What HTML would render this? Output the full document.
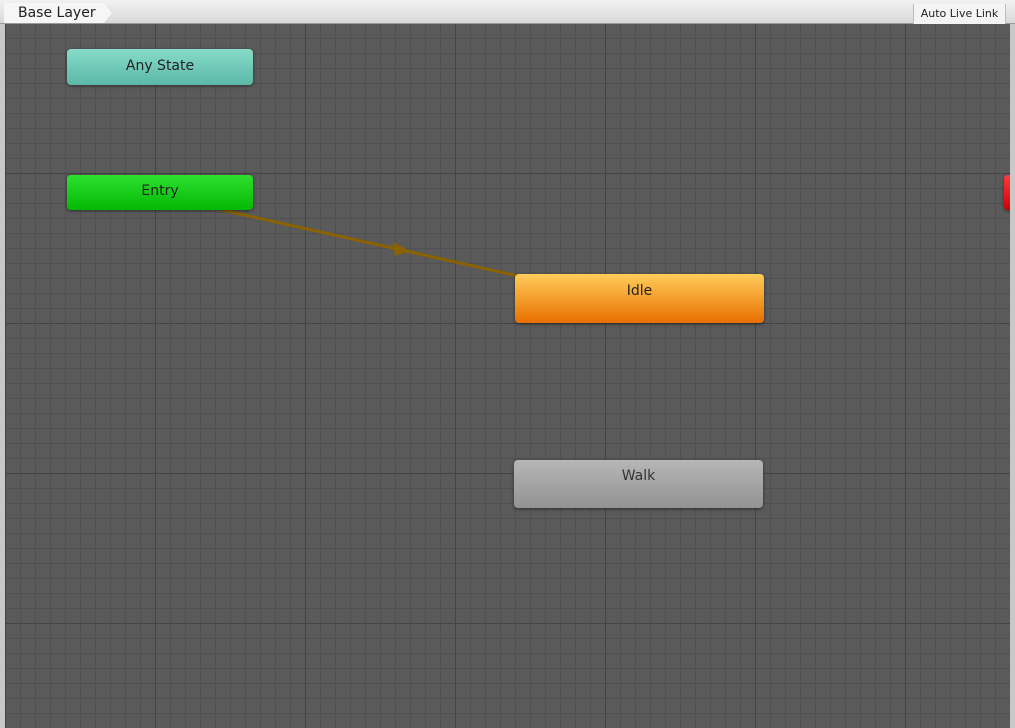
<!DOCTYPE html>
<html><head><style>
body{margin:0;width:1015px;height:728px;overflow:hidden;background:#c8c8c8;font-family:"DejaVu Sans","Liberation Sans",sans-serif;position:relative}
#top{position:absolute;left:0;top:0;width:1015px;height:24px;background:linear-gradient(#f2f2f2,#d8d8d8);border-bottom:1px solid #9a9a9a;box-sizing:border-box}
#tab{position:absolute;left:4px;top:3px;width:100px;height:20px;background:#f6f6f6;font-size:14px;line-height:20px;padding-left:14px;box-sizing:border-box;color:#222}
#tab:after{content:"";position:absolute;right:-8px;top:0;border-left:8px solid #f6f6f6;border-top:10px solid transparent;border-bottom:10px solid transparent}
#live{position:absolute;left:913px;top:4px;width:91px;height:20px;background:#f4f4f4;border-left:1px solid #bbb;border-right:1px solid #bbb;font-size:11px;line-height:20px;text-align:center;color:#222}
#canvas{position:absolute;left:5px;top:24px;width:1005px;height:704px;background-color:#5a5a5a;overflow:hidden;
background-image:linear-gradient(90deg,#444 1px,transparent 1px),linear-gradient(#444 1px,transparent 1px),linear-gradient(90deg,#505050 1px,transparent 1px),linear-gradient(#505050 1px,transparent 1px);
background-size:150px 150px,150px 150px,15px 15px,15px 15px;
background-position:0px 149px,0px 149px,0 0,0 14px;}
.n{position:absolute;border-radius:4px;text-align:center;font-size:14px;box-shadow:0 1px 3px rgba(0,0,0,.5);color:#222}
</style></head><body>
<div id="top"><div id="tab">Base Layer</div><div id="live">Auto Live Link</div></div>
<div id="canvas"><div class="n" style="left:999px;top:151px;width:14px;height:35px;background:linear-gradient(#ff3b3b,#d00000)"></div></div>
<svg style="position:absolute;left:0;top:0" width="1015" height="728">
<line x1="222" y1="210" x2="518" y2="276" stroke="#8a6200" stroke-width="3"/>
<polygon points="410,251 393,242 395,256" fill="#8a6200"/>
</svg>
<div class="n" style="left:67px;top:49px;width:186px;height:36px;line-height:34px;background:linear-gradient(#86dcc8,#5cb8a8)">Any State</div>
<div class="n" style="left:67px;top:175px;width:186px;height:35px;line-height:32px;background:linear-gradient(#2ee02e,#04b804)">Entry</div>
<div class="n" style="left:515px;top:274px;width:249px;height:49px;line-height:34px;background:linear-gradient(#ffcc5a,#e87000)">Idle</div>
<div class="n" style="left:514px;top:460px;width:249px;height:48px;line-height:32px;background:linear-gradient(#b6b6b6,#939393);color:#333">Walk</div>
</body></html>
